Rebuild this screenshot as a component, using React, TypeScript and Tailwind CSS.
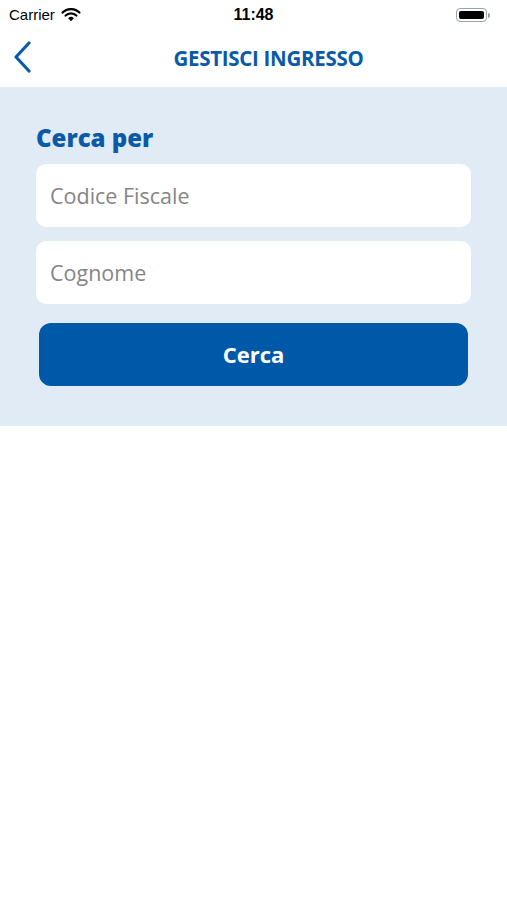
function StatusBar() {
  return (
    <div className="relative flex h-[30px] items-center justify-between px-[9px] font-['Liberation_Sans',sans-serif] text-black">
      <div className="flex items-center gap-[6px] text-[15px]">
        <span>Carrier</span>
        <svg width="20" height="14" viewBox="0 0 20 14" fill="none">
          <path d="M10 13.2 L7.2 10.2 A4 4 0 0 1 12.8 10.2 Z" fill="#000" />
          <path d="M4.6 7.6 A7.6 7.6 0 0 1 15.4 7.6" stroke="#000" strokeWidth="2.2" strokeLinecap="round" />
          <path d="M1.6 4.6 A11.8 11.8 0 0 1 18.4 4.6" stroke="#000" strokeWidth="2.2" strokeLinecap="round" />
        </svg>
      </div>
      <span className="absolute left-1/2 -translate-x-1/2 text-[16px] font-bold">11:48</span>
      <div className="flex items-center pr-[8px]">
        <div className="flex h-[14px] w-[31px] items-center rounded-[4px] border border-gray-400 p-[2px]">
          <div className="h-full w-full rounded-[2px] bg-black" />
        </div>
        <div className="ml-[1px] h-[5px] w-[2px] rounded-r-sm bg-gray-400" />
      </div>
    </div>
  );
}

export default function App() {
  return (
    <div className="min-h-[900px] bg-white font-['Open_Sans',sans-serif]">
      <StatusBar />
      <div className="relative flex h-[57px] items-center justify-center">
        <button className="absolute left-[12px] top-[11px] text-[#0b5aa8]">
          <svg width="20" height="32" viewBox="0 0 20 32" fill="none">
            <path d="M17 2 L4 16 L17 30" stroke="currentColor" strokeWidth="3.2" strokeLinecap="round" strokeLinejoin="round" />
          </svg>
        </button>
        <h1 className="ml-[30px] text-[20.5px] font-bold tracking-[-0.3px] text-[#0b5aa8]">GESTISCI INGRESSO</h1>
      </div>
      <div className="flex flex-col bg-[#e1ebf5] px-[36px] pb-[40px] pt-[35px]">
        <h2 className="mb-[10px] text-[24px] font-extrabold leading-[32px] text-[#0b5aa8]">Cerca per</h2>
        <div className="flex flex-col gap-[14px]">
          <input
            placeholder="Codice Fiscale"
            className="h-[63px] rounded-[10px] bg-white px-[14px] text-[21.5px] text-gray-800 outline-none placeholder:text-[#858585]"
          />
          <input
            placeholder="Cognome"
            className="h-[63px] rounded-[10px] bg-white px-[14px] text-[21.5px] text-gray-800 outline-none placeholder:text-[#858585]"
          />
        </div>
        <button className="mx-[3px] mt-[19px] h-[63px] rounded-[12px] bg-[#0059a8] text-[22px] font-bold text-white">
          Cerca
        </button>
      </div>
    </div>
  );
}
